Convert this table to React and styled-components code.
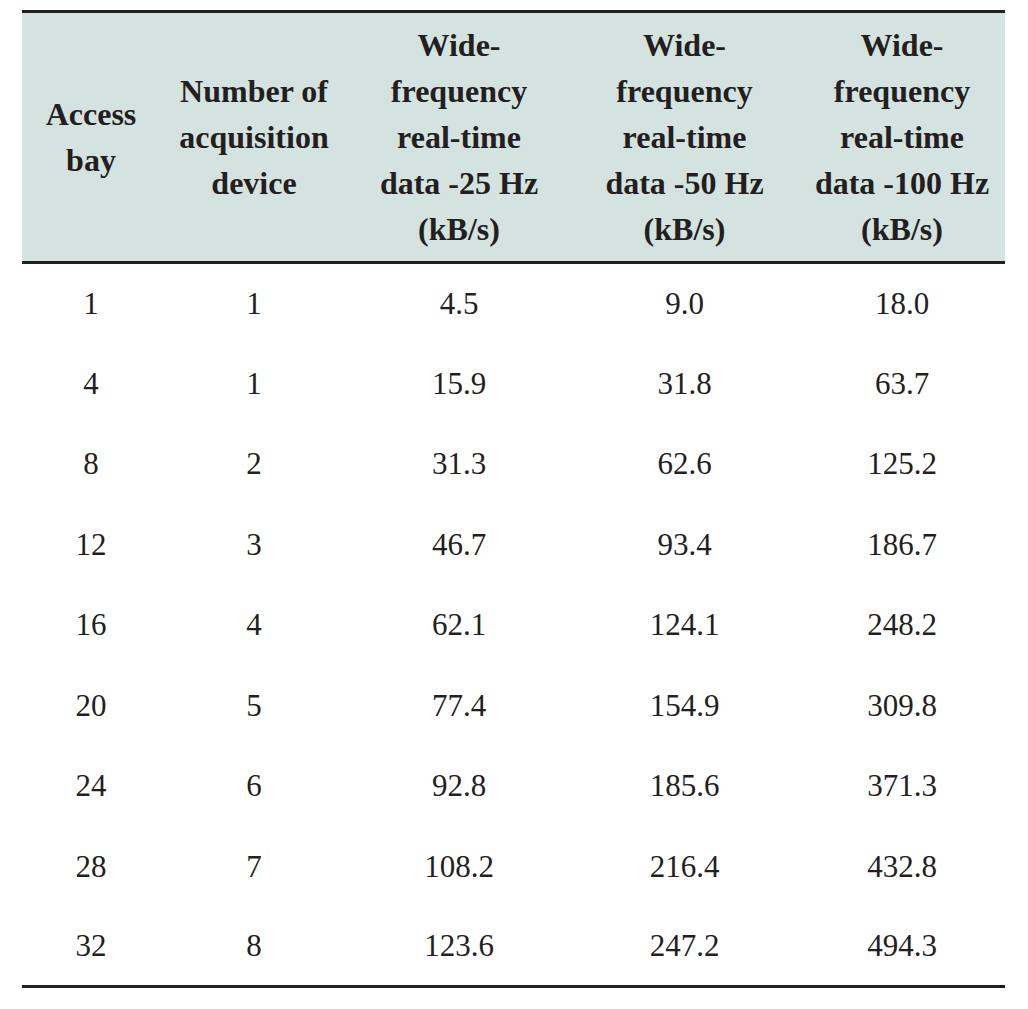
import React from "react";
import styled, { createGlobalStyle } from "styled-components";

const Global = createGlobalStyle`
  html, body { margin: 0; padding: 0; background: #ffffff; }
  body { font-family: "Liberation Serif", "Times New Roman", serif; color: #231f20; }
`;

const Page = styled.div`
  padding: 10px 23px 20px 22px;
`;

const Table = styled.table`
  width: 983px;
  border-collapse: collapse;
  table-layout: fixed;
  font-family: "Liberation Serif", "Times New Roman", serif;
  color: #231f20;
  border-top: 3px solid #231f20;
  border-bottom: 3px solid #231f20;
`;

const HeadRow = styled.tr`
  background: #d5e3e0;
  border-bottom: 3px solid #231f20;
`;

const Th = styled.th`
  width: ${(p) => p.$w}px;
  padding: 9px 0 9px;
  font-family: "Liberation Serif", "Times New Roman", serif;
  font-size: 32px;
  line-height: 46px;
  font-weight: 700;
  text-align: center;
  vertical-align: middle;
`;

const BodyRow = styled.tr`
  height: ${(p) => (p.$tall ? 81 : 80)}px;
`;

const Td = styled.td`
  padding: 1px 0 0;
  font-family: "Liberation Serif", "Times New Roman", serif;
  font-size: 31px;
  line-height: 36px;
  text-align: center;
  vertical-align: middle;
`;

const columns = [
  { w: 138, lines: ["Access", "bay"] },
  { w: 188, lines: ["Number of", "acquisition", "device"] },
  { w: 222, lines: ["Wide-", "frequency", "real-time", "data -25 Hz", "(kB/s)"] },
  { w: 229, lines: ["Wide-", "frequency", "real-time", "data -50 Hz", "(kB/s)"] },
  { w: 206, lines: ["Wide-", "frequency", "real-time", "data -100 Hz", "(kB/s)"] },
];

const rows = [
  ["1", "1", "4.5", "9.0", "18.0"],
  ["4", "1", "15.9", "31.8", "63.7"],
  ["8", "2", "31.3", "62.6", "125.2"],
  ["12", "3", "46.7", "93.4", "186.7"],
  ["16", "4", "62.1", "124.1", "248.2"],
  ["20", "5", "77.4", "154.9", "309.8"],
  ["24", "6", "92.8", "185.6", "371.3"],
  ["28", "7", "108.2", "216.4", "432.8"],
  ["32", "8", "123.6", "247.2", "494.3"],
];

export default function App() {
  return (
    <>
      <Global />
      <Page>
        <Table>
          <thead>
            <HeadRow>
              {columns.map((c, i) => (
                <Th key={i} $w={c.w}>
                  {c.lines.map((l, j) => (
                    <React.Fragment key={j}>
                      {j > 0 && <br />}
                      {l}
                    </React.Fragment>
                  ))}
                </Th>
              ))}
            </HeadRow>
          </thead>
          <tbody>
            {rows.map((r, i) => (
              <BodyRow key={i} $tall={i % 2 === 1}>
                {r.map((v, j) => (
                  <Td key={j}>{v}</Td>
                ))}
              </BodyRow>
            ))}
          </tbody>
        </Table>
      </Page>
    </>
  );
}
